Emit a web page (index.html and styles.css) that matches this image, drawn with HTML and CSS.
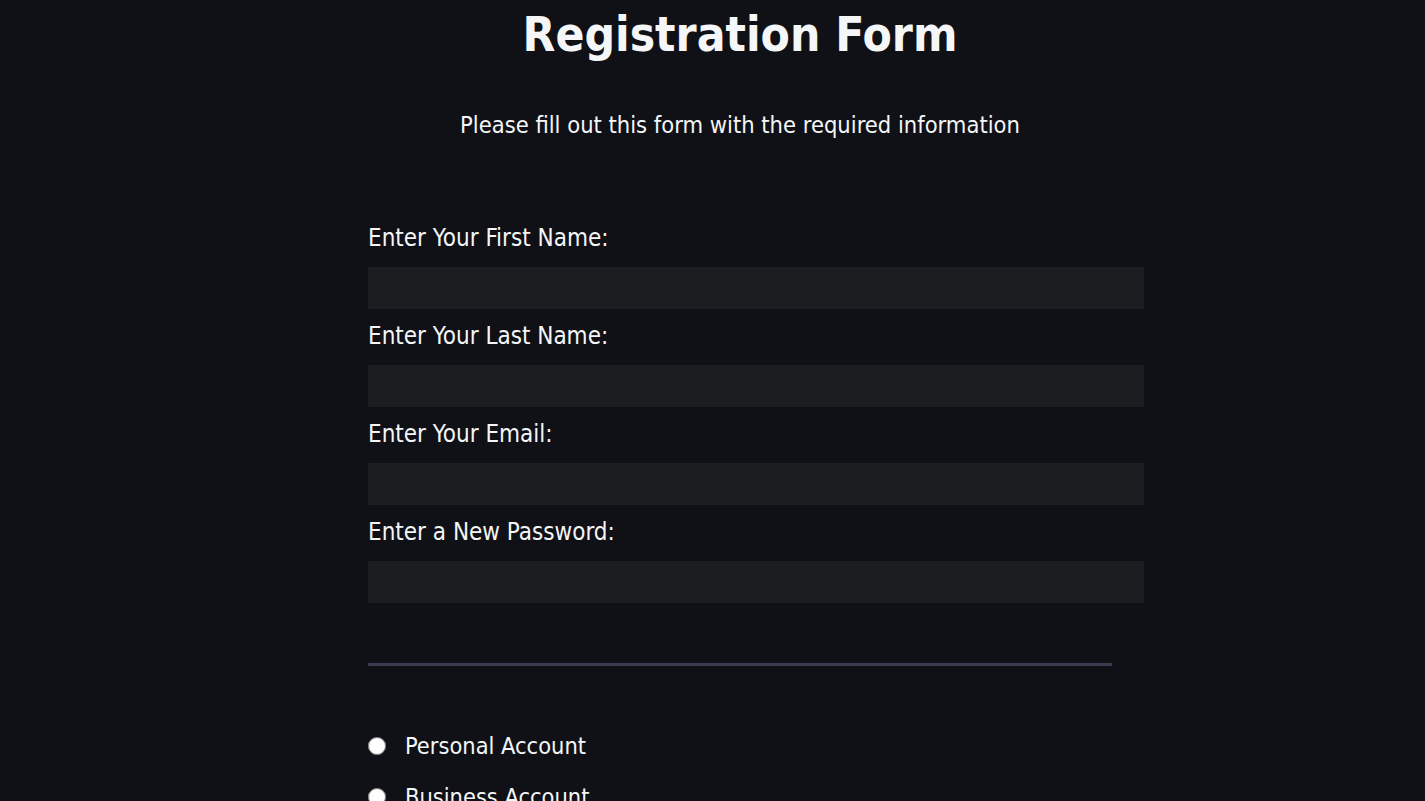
FILE: index.html
```html
<!DOCTYPE html>
<html lang="en">
<head>
<meta charset="utf-8">
<title>Registration Form</title>
<link rel="stylesheet" href="styles.css">
</head>
<body>
<main class="page">
  <h1 class="title">Registration Form</h1>
  <p class="subtitle">Please fill out this form with the required information</p>
  <form class="form">
    <fieldset class="group">
      <label class="field">Enter Your First Name:
        <input class="input" type="text">
      </label>
      <label class="field">Enter Your Last Name:
        <input class="input" type="text">
      </label>
      <label class="field">Enter Your Email:
        <input class="input" type="email">
      </label>
      <label class="field">Enter a New Password:
        <input class="input" type="password">
      </label>
    </fieldset>
    <fieldset class="group radios">
      <label class="radio"><input class="radio-input" type="radio" name="account"> Personal Account</label>
      <label class="radio"><input class="radio-input" type="radio" name="account"> Business Account</label>
    </fieldset>
  </form>
</main>
</body>
</html>
```
FILE: styles.css
```css
html, body {
  margin: 0;
  padding: 0;
  background: #101116;
  color: #f5f6f7;
  font-family: "DejaVu Sans Condensed", "DejaVu Sans", sans-serif;
}
.page {
  width: 744px;
  margin: 0 0 0 368px;
}
.title {
  margin: 0;
  padding-top: 3px;
  text-align: center;
  font-size: 47.5px;
  font-weight: bold;
  line-height: 64px;
}
.subtitle {
  margin: 43px 0 0;
  text-align: center;
  font-size: 23.5px;
  line-height: 30px;
}
.form {
  margin-top: 83px;
}
.group {
  margin: 0;
  padding: 0 0 48px;
  border: none;
  border-bottom: 3px solid #3b3b4f;
}
.field {
  display: block;
  font-size: 24px;
  line-height: 30px;
  margin-bottom: 12px;
}
.input {
  display: block;
  box-sizing: content-box;
  width: 100%;
  height: 42px;
  padding: 0 16px;
  margin: 14px 0 0;
  border: none;
  background: #1c1d21;
  color: #f5f6f7;
  font-size: 18px;
}
.radios {
  border-bottom: none;
  padding-top: 65px;
}
.radio {
  display: flex;
  align-items: center;
  gap: 19px;
  font-size: 23.4px;
  line-height: 30px;
  margin-bottom: 21px;
}
.radio-input {
  width: 18px;
  height: 18px;
  margin: 0;
}
```
